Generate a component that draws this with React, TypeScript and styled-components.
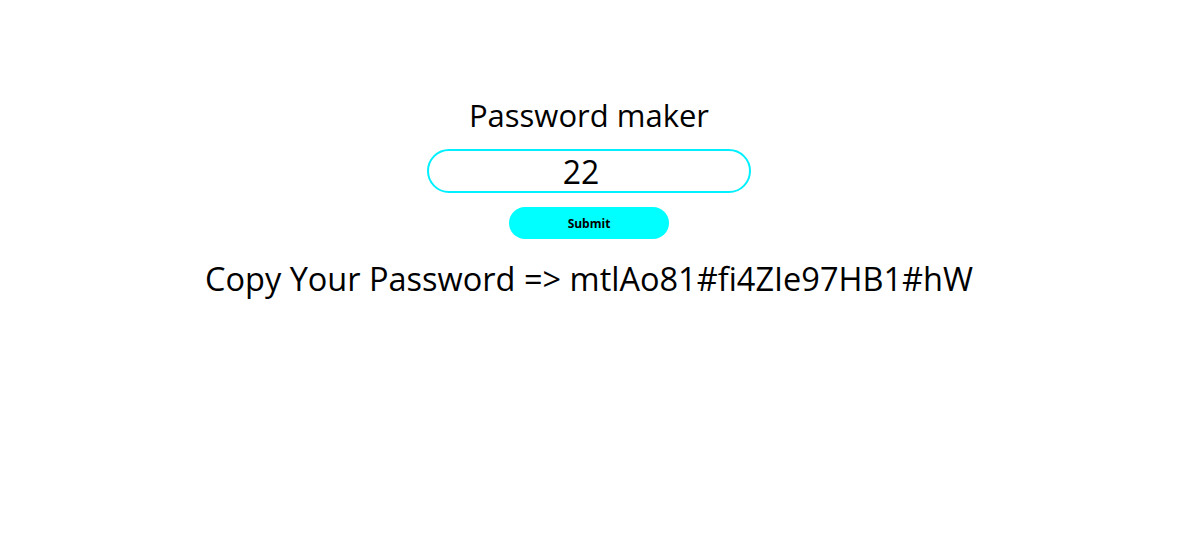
import React, { useState } from "react";
import styled, { createGlobalStyle } from "styled-components";

const Global = createGlobalStyle`
  html, body { margin: 0; padding: 0; background: #ffffff; }
  body { font-family: "Comic Sans MS", "Open Sans", sans-serif; color: #000; }
`;

const Page = styled.main`
  display: flex;
  flex-direction: column;
  align-items: center;
  padding: 95px 8px 0 0;
`;

const Title = styled.h1`
  margin: 0;
  font-size: 31px;
  font-weight: 400;
  line-height: 40px;
`;

const Field = styled.input`
  box-sizing: border-box;
  margin-top: 14px;
  width: 324px;
  height: 44px;
  padding: 0 16px 0 0;
  border: 2px solid #00f0ff;
  border-radius: 22px;
  outline: none;
  text-align: center;
  font-family: inherit;
  font-size: 32px;
  color: #000;
  background: #fff;
`;

const SubmitButton = styled.button`
  margin-top: 14px;
  width: 160px;
  height: 32px;
  border: none;
  border-radius: 16px;
  background: #00ffff;
  font-family: inherit;
  font-weight: 700;
  font-size: 12px;
  color: #000;
  cursor: pointer;
`;

const Result = styled.p`
  margin: 20px 0 0;
  font-size: 32.5px;
  line-height: 40px;
  white-space: nowrap;
`;

export default function App() {
  const [len, setLen] = useState("22");
  return (
    <>
      <Global />
      <Page>
        <Title>Password maker</Title>
        <Field value={len} onChange={(e) => setLen(e.target.value)} />
        <SubmitButton>Submit</SubmitButton>
        <Result>Copy Your Password =&gt; mtlAo81#fi4ZIe97HB1#hW</Result>
      </Page>
    </>
  );
}
